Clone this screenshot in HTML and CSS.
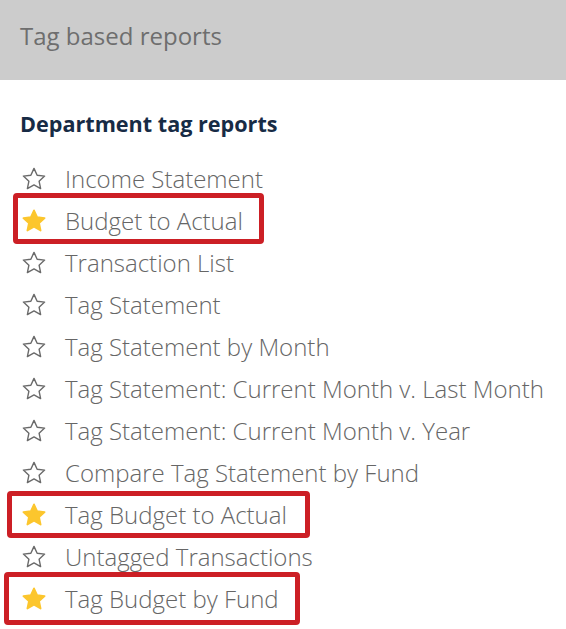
FILE: index.html
```html
<!DOCTYPE html>
<html>
<head>
<meta charset="utf-8">
<link rel="stylesheet" href="styles.css">
</head>
<body>
<div class="page">
  <header class="banner">Tag based reports</header>
  <section class="section">
    <h2 class="section-title">Department tag reports</h2>
    <ul class="reports">
      <li class="report"><svg class="star" viewBox="0 0 24 24"><path d="M12 2.2l2.9 6.3 6.9.8-5.1 4.7 1.4 6.8L12 17.4l-6.1 3.4 1.4-6.8-5.1-4.7 6.9-.8z"/></svg><span>Income Statement</span></li>
      <li class="report fav"><svg class="star" viewBox="0 0 24 24"><path d="M12 2.2l2.9 6.3 6.9.8-5.1 4.7 1.4 6.8L12 17.4l-6.1 3.4 1.4-6.8-5.1-4.7 6.9-.8z"/></svg><span>Budget to Actual</span><i class="mark m1"></i></li>
      <li class="report"><svg class="star" viewBox="0 0 24 24"><path d="M12 2.2l2.9 6.3 6.9.8-5.1 4.7 1.4 6.8L12 17.4l-6.1 3.4 1.4-6.8-5.1-4.7 6.9-.8z"/></svg><span>Transaction List</span></li>
      <li class="report"><svg class="star" viewBox="0 0 24 24"><path d="M12 2.2l2.9 6.3 6.9.8-5.1 4.7 1.4 6.8L12 17.4l-6.1 3.4 1.4-6.8-5.1-4.7 6.9-.8z"/></svg><span>Tag Statement</span></li>
      <li class="report"><svg class="star" viewBox="0 0 24 24"><path d="M12 2.2l2.9 6.3 6.9.8-5.1 4.7 1.4 6.8L12 17.4l-6.1 3.4 1.4-6.8-5.1-4.7 6.9-.8z"/></svg><span>Tag Statement by Month</span></li>
      <li class="report"><svg class="star" viewBox="0 0 24 24"><path d="M12 2.2l2.9 6.3 6.9.8-5.1 4.7 1.4 6.8L12 17.4l-6.1 3.4 1.4-6.8-5.1-4.7 6.9-.8z"/></svg><span>Tag Statement: Current Month v. Last Month</span></li>
      <li class="report"><svg class="star" viewBox="0 0 24 24"><path d="M12 2.2l2.9 6.3 6.9.8-5.1 4.7 1.4 6.8L12 17.4l-6.1 3.4 1.4-6.8-5.1-4.7 6.9-.8z"/></svg><span>Tag Statement: Current Month v. Year</span></li>
      <li class="report"><svg class="star" viewBox="0 0 24 24"><path d="M12 2.2l2.9 6.3 6.9.8-5.1 4.7 1.4 6.8L12 17.4l-6.1 3.4 1.4-6.8-5.1-4.7 6.9-.8z"/></svg><span>Compare Tag Statement by Fund</span></li>
      <li class="report fav"><svg class="star" viewBox="0 0 24 24"><path d="M12 2.2l2.9 6.3 6.9.8-5.1 4.7 1.4 6.8L12 17.4l-6.1 3.4 1.4-6.8-5.1-4.7 6.9-.8z"/></svg><span>Tag Budget to Actual</span><i class="mark m2"></i></li>
      <li class="report"><svg class="star" viewBox="0 0 24 24"><path d="M12 2.2l2.9 6.3 6.9.8-5.1 4.7 1.4 6.8L12 17.4l-6.1 3.4 1.4-6.8-5.1-4.7 6.9-.8z"/></svg><span>Untagged Transactions</span></li>
      <li class="report fav"><svg class="star" viewBox="0 0 24 24"><path d="M12 2.2l2.9 6.3 6.9.8-5.1 4.7 1.4 6.8L12 17.4l-6.1 3.4 1.4-6.8-5.1-4.7 6.9-.8z"/></svg><span>Tag Budget by Fund</span><i class="mark m3"></i></li>
    </ul>
  </section>
</div>
</body>
</html>
```

FILE: styles.css
```css
* { box-sizing: border-box; }
html, body { margin: 0; padding: 0; background: #fff; }
body { font-family: "Open Sans", "Liberation Sans", sans-serif; width: 566px; height: 629px; overflow: hidden; }
.page { display: flex; flex-direction: column; }
.banner {
  height: 80px;
  background: #cccccc;
  color: #6e6e6e;
  font-size: 24px;
  font-weight: 400;
  padding: 20px 20px 0;
  line-height: 32px;
}
.section { padding: 0 0 0 20px; }
.section-title {
  margin: 29px 0 0;
  font-size: 21.6px;
  font-weight: 700;
  line-height: 30px;
  color: #172b45;
}
.reports { list-style: none; margin: 19px 0 0; padding: 0; }
.report {
  position: relative;
  display: flex;
  align-items: center;
  height: 42px;
  font-size: 24px;
  font-weight: 300;
  color: #666666;
}
.report span { margin-left: 18px; line-height: 30px; }
.star { width: 26px; height: 26px; flex: none; margin-left: 1px; }
.star path { fill: none; stroke: #6a6a6a; stroke-width: 1.3; stroke-linejoin: round; }
.fav .star path { fill: #fcc62d; stroke: #fcc62d; stroke-width: 1.6; }
.mark {
  position: absolute;
  border: 5px solid #cc1f25;
  border-radius: 4px;
}
.m1 { left: -7px; top: -7px; width: 251px; height: 51px; }
.m2 { left: -13px; top: -3px; width: 303px; height: 47px; }
.m3 { left: -16px; top: -6px; width: 296px; height: 53px; }
```
